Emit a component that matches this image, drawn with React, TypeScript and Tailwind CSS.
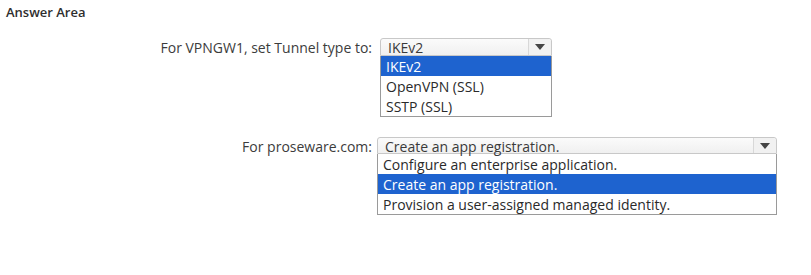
import React from "react";

function Arrow() {
  return (
    <div className="w-[23px] self-stretch flex items-center justify-center border-l border-[#d8d8d8] bg-[#f1f1f1] rounded-tr-[3px]">
      <svg width="10" height="6" viewBox="0 0 10 6">
        <path d="M0 0 L10 0 L5 6 Z" fill="#444" />
      </svg>
    </div>
  );
}

function Select({
  width,
  value,
  options,
  selected,
  h,
}: {
  width: number;
  value: string;
  options: string[];
  selected: number;
  h: number;
}) {
  return (
    <div style={{ width }}>
      <div
        className="flex items-stretch border border-[#c8c8c8] rounded-t-[3px] bg-gradient-to-b from-[#fbfbfb] to-[#f0f0f0]"
        style={{ height: h }}
      >
        <div className="flex-1 flex items-center pl-[7px] text-[#3a3a3a] leading-none pt-[2px]">{value}</div>
        <Arrow />
      </div>
      <div className="border border-t-0 border-[#9a9a9a] bg-white">
        {options.map((o, i) => (
          <div
            key={o}
            className={
              i === selected
                ? "h-[20px] flex items-center pl-[5px] bg-[#1e63cf] text-white"
                : "h-[20px] flex items-center pl-[5px] text-[#2a2a2a]"
            }
          >
            {o}
          </div>
        ))}
      </div>
    </div>
  );
}

export default function App() {
  return (
    <div
      className="w-[811px] h-[275px] bg-white text-[14px] text-[#3c3c3c]"
      style={{ fontFamily: '"Open Sans", "Noto Sans", sans-serif' }}
    >
      <div className="pl-[6px] pt-[3px] text-[13px] font-semibold text-[#2e2e2e] leading-[18px]">Answer Area</div>
      <div className="flex mt-[17px]">
        <div className="w-[380px] text-right pr-[8px] pt-[1px] leading-[18px]">For VPNGW1, set Tunnel type to:</div>
        <Select width={172} h={18} value="IKEv2" options={["IKEv2", "OpenVPN (SSL)", "SSTP (SSL)"]} selected={0} />
      </div>
      <div className="flex mt-[20px]">
        <div className="w-[377px] text-right pr-[5px] pt-[1px] leading-[17px]">For proseware.com:</div>
        <Select
          width={400}
          h={17}
          value="Create an app registration."
          options={[
            "Configure an enterprise application.",
            "Create an app registration.",
            "Provision a user-assigned managed identity.",
          ]}
          selected={1}
        />
      </div>
    </div>
  );
}
